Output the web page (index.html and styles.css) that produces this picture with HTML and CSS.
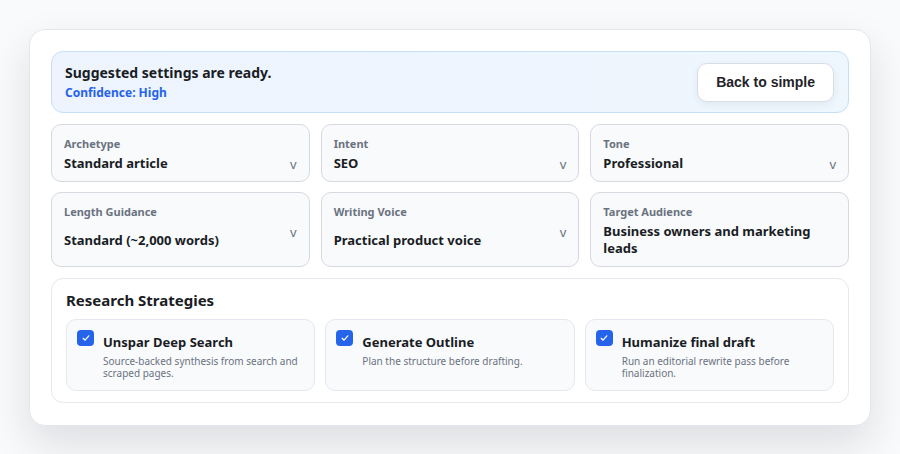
FILE: index.html
```html
<!DOCTYPE html>
<html lang="en">
<head>
    <meta charset="UTF-8">
    <meta name="viewport" content="width=device-width, initial-scale=1.0">
    <title>Article Settings</title>
    <link rel="stylesheet" href="styles.css">
</head>
<body>
    <div class="panel">
        <div class="banner">
            <div class="banner-text">
                <h3>Suggested settings are ready.</h3>
                <div class="confidence">Confidence: High</div>
            </div>
            <button type="button" class="back-btn">Back to simple</button>
        </div>

        <div class="field-grid">
            <div class="field">
                <span class="field-label">Archetype</span>
                <div class="field-value">Standard article</div>
                <span class="chevron">v</span>
            </div>
            <div class="field">
                <span class="field-label">Intent</span>
                <div class="field-value">SEO</div>
                <span class="chevron">v</span>
            </div>
            <div class="field">
                <span class="field-label">Tone</span>
                <div class="field-value">Professional</div>
                <span class="chevron">v</span>
            </div>
            <div class="field">
                <span class="field-label">Length Guidance</span>
                <div class="field-value">Standard (~2,000 words)</div>
                <span class="chevron">v</span>
            </div>
            <div class="field">
                <span class="field-label">Writing Voice</span>
                <div class="field-value">Practical product voice</div>
                <span class="chevron">v</span>
            </div>
            <div class="field">
                <span class="field-label">Target Audience</span>
                <div class="field-value">Business owners and marketing leads</div>
            </div>
        </div>

        <div class="strategies">
            <h4>Research Strategies</h4>
            <div class="strategy-list">
                <label class="strategy">
                    <span class="check">
                        <svg viewBox="0 0 16 16" width="10" height="10"><path d="M3.5 8.5l3 3 6-7" fill="none" stroke="#fff" stroke-width="2" stroke-linecap="round" stroke-linejoin="round"/></svg>
                    </span>
                    <span class="strategy-text">
                        <strong>Unspar Deep Search</strong>
                        <small>Source-backed synthesis from search and scraped pages.</small>
                    </span>
                </label>
                <label class="strategy">
                    <span class="check">
                        <svg viewBox="0 0 16 16" width="10" height="10"><path d="M3.5 8.5l3 3 6-7" fill="none" stroke="#fff" stroke-width="2" stroke-linecap="round" stroke-linejoin="round"/></svg>
                    </span>
                    <span class="strategy-text">
                        <strong>Generate Outline</strong>
                        <small>Plan the structure before drafting.</small>
                    </span>
                </label>
                <label class="strategy">
                    <span class="check">
                        <svg viewBox="0 0 16 16" width="10" height="10"><path d="M3.5 8.5l3 3 6-7" fill="none" stroke="#fff" stroke-width="2" stroke-linecap="round" stroke-linejoin="round"/></svg>
                    </span>
                    <span class="strategy-text">
                        <strong>Humanize final draft</strong>
                        <small>Run an editorial rewrite pass before finalization.</small>
                    </span>
                </label>
            </div>
        </div>
    </div>
</body>
</html>
```

FILE: styles.css
```css
* {
    margin: 0;
    padding: 0;
    box-sizing: border-box;
}

body {
    font-family: 'Noto Sans', 'Open Sans', sans-serif;
    background: #f9fafb;
    min-height: 100vh;
    padding: 29px;
    color: #1a1d24;
}

.panel {
    background: #fff;
    border: 1px solid #e2e7ef;
    border-radius: 16px;
    padding: 21px 21px 22px;
    box-shadow: 0 18px 40px rgba(15, 23, 42, 0.12);
    display: flex;
    flex-direction: column;
    gap: 11px;
}

/* suggestion banner */
.banner {
    display: flex;
    justify-content: space-between;
    align-items: center;
    height: 62px;
    padding: 0 14px 0 13px;
    background: linear-gradient(90deg, #edf4fe, #eef6fe);
    border: 1px solid #c5e0f5;
    border-radius: 12px;
}

.banner h3 {
    font-size: 14px;
    font-weight: 700;
    line-height: 19px;
    color: #1a1d24;
}

.confidence {
    margin-top: 3px;
    font-size: 12px;
    font-weight: 700;
    line-height: 16px;
    color: #2563eb;
}

.back-btn {
    font-family: 'Liberation Sans', Arial, sans-serif;
    font-size: 14px;
    font-weight: 700;
    color: #1f2328;
    background: #fff;
    border: 1px solid #d8dde6;
    border-radius: 10px;
    padding: 10px 18px;
    line-height: 17px;
    box-shadow: 0 3px 8px rgba(15, 23, 42, 0.06);
    cursor: pointer;
}

/* settings fields */
.field-grid {
    display: grid;
    grid-template-columns: repeat(3, 1fr);
    gap: 10px 11px;
}

.field {
    position: relative;
    display: flex;
    flex-direction: column;
    padding: 11px 30px 9px 12px;
    background: #f8fafc;
    border: 1px solid #d6d9df;
    border-radius: 10px;
}

.field-label {
    font-size: 11px;
    font-weight: 700;
    line-height: 15px;
    color: #6b7280;
}

.field-value {
    flex: 1;
    display: flex;
    align-items: center;
    margin-top: 4px;
    font-size: 13px;
    font-weight: 700;
    line-height: 17px;
    color: #1a1d24;
}

.chevron {
    position: absolute;
    top: 31px;
    right: 12px;
    font-size: 13px;
    line-height: 17px;
    color: #6b7280;
}

/* research strategies */
.strategies {
    border: 1px solid #e5e8ee;
    border-radius: 12px;
    padding: 11px 14px 11px;
}

.strategies h4 {
    font-size: 15px;
    font-weight: 700;
    line-height: 20px;
    color: #1a1d24;
    margin-bottom: 9px;
}

.strategy-list {
    display: grid;
    grid-template-columns: repeat(3, 1fr);
    gap: 10px;
}

.strategy {
    display: flex;
    gap: 9px;
    padding: 10px 10px 10px;
    min-height: 72px;
    background: #f8fafc;
    border: 1px solid #e5e8ee;
    border-radius: 10px;
}

.check {
    flex: none;
    width: 17px;
    height: 16px;
    border-radius: 4px;
    background: #2563eb;
    display: flex;
    align-items: center;
    justify-content: center;
}

.strategy-text {
    display: flex;
    flex-direction: column;
    padding-top: 3px;
}

.strategy-text strong {
    font-size: 13px;
    font-weight: 700;
    line-height: 18px;
    color: #1a1d24;
}

.strategy-text small {
    margin-top: 4px;
    font-size: 10px;
    line-height: 12px;
    color: #6b7280;
}
```
